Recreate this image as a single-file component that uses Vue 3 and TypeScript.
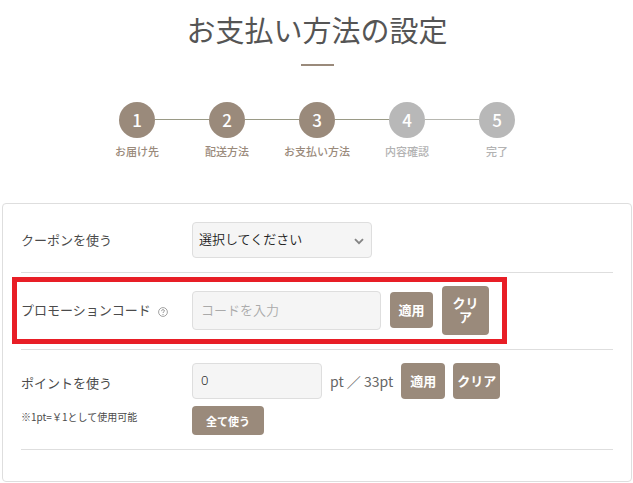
<script setup lang="ts">
import { ref } from 'vue'

interface Step {
  label: string
  reached: boolean
}

const steps: Step[] = [
  { label: 'お届け先', reached: true },
  { label: '配送方法', reached: true },
  { label: 'お支払い方法', reached: true },
  { label: '内容確認', reached: false },
  { label: '完了', reached: false },
]

const available = 33
const coupon = ref('')
const promo = ref('')
const points = ref('0')
</script>

<template>
  <main class="page">
    <h1 class="title">お支払い方法の設定</h1>

    <ol class="steps">
      <li v-for="(step, i) in steps" :key="step.label" class="step" :class="{ reached: step.reached }">
        <span class="circle">{{ i + 1 }}</span>
        <span class="step-label">{{ step.label }}</span>
      </li>
    </ol>

    <form class="panel" @submit.prevent>
      <div class="row">
        <label class="name" for="coupon">クーポンを使う</label>
        <div class="select-wrap">
          <select id="coupon" v-model="coupon" class="field select">
            <option value="">選択してください</option>
          </select>
          <svg class="chevron" viewBox="0 0 10 7" aria-hidden="true">
            <path d="M1 1.2 5 5.2 9 1.2" fill="none" stroke="#858585" stroke-width="1.9" />
          </svg>
        </div>
      </div>

      <div class="row promo">
        <div class="name">
          <label for="promo">プロモーションコード</label>
          <svg class="help" viewBox="0 0 10 10" aria-hidden="true">
            <circle cx="5" cy="5" r="4.4" fill="none" stroke="#8a8a8a" stroke-width="0.8" />
            <path d="M3.6 4.1C3.6 2.2 6.4 2.3 6.4 3.9 6.4 4.9 5 4.8 5 6" fill="none" stroke="#777" stroke-width="0.8" />
            <circle cx="5" cy="7.4" r="0.5" fill="#777" />
          </svg>
        </div>
        <input id="promo" v-model="promo" class="field code" type="text" placeholder="コードを入力" />
        <button class="btn" type="button">適用</button>
        <button class="btn tall" type="button" @click="promo = ''">クリア</button>
        <span class="highlight"></span>
      </div>

      <div class="row points">
        <label class="name" for="points">ポイントを使う</label>
        <div class="controls">
          <input id="points" v-model="points" class="field amount" type="text" />
          <span class="unit">pt ／ {{ available }}pt</span>
          <button class="btn" type="button">適用</button>
          <button class="btn clear" type="button" @click="points = '0'">クリア</button>
        </div>
        <small class="note">※1pt=￥1として使用可能</small>
        <button class="btn all" type="button" @click="points = String(available)">全て使う</button>
      </div>
    </form>
  </main>
</template>

<style>
body {
  background: #fff;
}
</style>

<style scoped>
.page,
.page * {
  box-sizing: border-box;
}

.page {
  padding: 7px 1px 1px 2px;
  color: #4b4b4b;
  font-family: "Noto Sans CJK JP", sans-serif;
  font-size: 13px;
  line-height: 20px;
}

.title {
  display: flex;
  flex-direction: column;
  align-items: center;
  gap: 13px;
  margin: 0;
  color: #555;
  font-size: 29px;
  font-weight: 400;
  line-height: 44px;
}

.title::after {
  content: "";
  width: 33px;
  height: 2px;
  background: #9a8a7b;
}

.steps {
  display: flex;
  justify-content: center;
  margin: 36px 0 0;
  padding: 0;
  list-style: none;
}

.step {
  position: relative;
  display: flex;
  flex-direction: column;
  align-items: center;
  gap: 3px;
  width: 90px;
  color: #b3b3b3;
}

.step.reached {
  color: #9a8a7b;
}

.step:not(:last-child)::after {
  content: "";
  position: absolute;
  top: 17px;
  left: 63px;
  width: 54px;
  height: 1px;
  background: #b7b7b0;
}

.step.reached::after {
  background: #9a9a86;
}

.circle {
  display: grid;
  place-items: center;
  width: 36px;
  height: 36px;
  border-radius: 50%;
  background: #b8b8b8;
  color: #fff;
  font-size: 17px;
  font-weight: 500;
}

.reached .circle {
  background: #9a8a7b;
}

.step-label {
  font-size: 11px;
  font-weight: 500;
}

.panel {
  margin-top: 42px;
  padding: 0 18px 31px;
  border: 1px solid #dedede;
  border-radius: 4px;
}

.row {
  display: flex;
  align-items: center;
  border-bottom: 1px solid #dedede;
}

.row:first-child {
  padding: 18px 0 14px;
}

.promo {
  position: relative;
  gap: 9px;
  min-height: 77px;
  padding-bottom: 2px;
}

.name {
  flex: 0 0 171px;
}

.promo .name {
  display: flex;
  align-items: center;
  gap: 7px;
  flex-basis: 162px;
}

.help {
  width: 10px;
  height: 10px;
  margin-top: 3px;
}

.field {
  height: 36px;
  margin: 0;
  padding: 0 8px 2px;
  border: 1px solid #dedede;
  border-radius: 4px;
  outline: none;
  background: #f5f5f5;
  color: #222;
  font-family: inherit;
  font-size: 13px;
  font-weight: 350;
}

.field::placeholder {
  color: #aaa;
  opacity: 1;
}

.select-wrap {
  position: relative;
}

.select {
  display: block;
  width: 180px;
  padding: 0 24px 4px 6px;
  appearance: none;
}

.chevron {
  position: absolute;
  top: 16px;
  right: 8px;
  width: 10px;
  height: 7px;
  pointer-events: none;
}

.code {
  width: 189px;
  height: 39px;
}

.btn {
  width: 44px;
  height: 36px;
  padding: 0;
  border: 0;
  border-radius: 4px;
  background: #9a8a7b;
  color: #fff;
  font-family: inherit;
  font-size: 13px;
  font-weight: 700;
  line-height: 14px;
}

.promo .btn {
  width: 43px;
}

.promo .tall {
  width: 47px;
  height: 49px;
  padding: 0 10px;
}

.highlight {
  position: absolute;
  top: 4px;
  left: -9px;
  width: 495px;
  height: 67px;
  border: 5px solid #e81e26;
  pointer-events: none;
}

.points {
  display: grid;
  grid-template-columns: 171px 1fr;
  row-gap: 7px;
  padding: 13px 0 14px;
}

.points .name {
  padding-top: 3px;
}

.controls {
  display: flex;
  align-items: center;
  gap: 8px;
}

.amount {
  width: 130px;
  font-family: "Noto Sans", "Noto Sans CJK JP", sans-serif;
}

.unit {
  color: #666;
  font-size: 14px;
  white-space: nowrap;
}

.clear {
  width: 47px;
}

.note {
  align-self: start;
  font-size: 10px;
  line-height: 22px;
}

.all {
  width: 72px;
  height: 29px;
  font-size: 11px;
}
</style>
